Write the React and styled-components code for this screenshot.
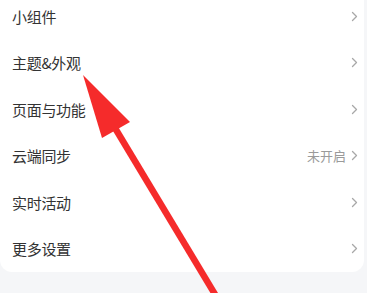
import React from "react";
import styled, { createGlobalStyle } from "styled-components";

const Global = createGlobalStyle`
  html, body { margin: 0; padding: 0; background: #f5f6f8; overflow: hidden; }
  body { font-family: "Noto Sans CJK SC", "Noto Sans", sans-serif; }
`;

const Page = styled.div`
  position: relative;
  width: 367px;
  height: 293px;
  overflow: hidden;
  background: #f5f6f8;
`;

const Card = styled.div`
  margin: -7.3px 3px 0 0;
  background: #ffffff;
  border-radius: 0 0 12px 12px;
  display: flex;
  flex-direction: column;
`;

const Row = styled.div`
  height: 46.6px;
  display: flex;
  align-items: center;
  padding: 0 6px 0 12px;
`;

const Label = styled.span`
  flex: 1;
  font-size: 15px;
  color: #333333;
  letter-spacing: -0.3px;
`;

const Value = styled.span`
  font-size: 13px;
  color: #9a9a9a;
  margin-right: 5px;
`;

const Overlay = styled.svg`
  position: absolute;
  left: 0;
  top: 0;
  pointer-events: none;
`;

const Chevron = () => (
  <svg width="7" height="11" viewBox="0 0 7 11">
    <polyline points="1.5,1.5 5.5,5.5 1.5,9.5" fill="none" stroke="#a8a8a8" strokeWidth="1.3" strokeLinecap="round" strokeLinejoin="round" />
  </svg>
);

const items = [
  { label: "小组件" },
  { label: "主题&外观" },
  { label: "页面与功能" },
  { label: "云端同步", value: "未开启" },
  { label: "实时活动" },
  { label: "更多设置" },
];

export default function App() {
  return (
    <Page>
      <Global />
      <Card>
        {items.map((it) => (
          <Row key={it.label}>
            <Label>{it.label}</Label>
            {it.value && <Value>{it.value}</Value>}
            <Chevron />
          </Row>
        ))}
      </Card>
      <Overlay width="367" height="293" viewBox="0 0 367 293">
        <line x1="115" y1="128" x2="216" y2="296" stroke="#f52b2b" strokeWidth="6.5" />
        <polygon points="83,75 130,122 102,138" fill="#f52b2b" />
      </Overlay>
    </Page>
  );
}
